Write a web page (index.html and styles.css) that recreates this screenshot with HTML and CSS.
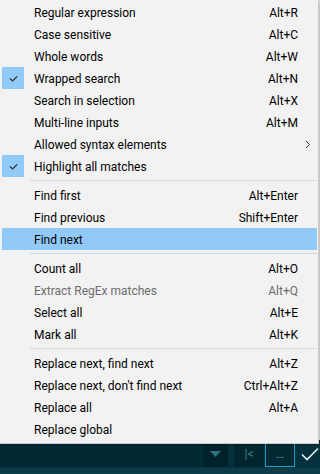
FILE: index.html
```html
<html>
  <head>
    <title>Find menu</title>
    <link rel="stylesheet" href="styles.css">
  </head>
  <body>
    <div class="screen">
      <div class="menu">
        <div class="item"><span class="gutter"></span><span class="label">Regular expression</span><span class="key">Alt+R</span><span class="sub"></span></div>
        <div class="item"><span class="gutter"></span><span class="label">Case sensitive</span><span class="key">Alt+C</span><span class="sub"></span></div>
        <div class="item"><span class="gutter"></span><span class="label">Whole words</span><span class="key">Alt+W</span><span class="sub"></span></div>
        <div class="item"><span class="gutter"><span class="check"><svg width="22" height="22" viewBox="0 0 22 22"><path d="M8 11.5l2.5 2.5l4.5-4.5" fill="none" stroke="#333" stroke-width="1.2"/></svg></span></span><span class="label">Wrapped search</span><span class="key">Alt+N</span><span class="sub"></span></div>
        <div class="item"><span class="gutter"></span><span class="label">Search in selection</span><span class="key">Alt+X</span><span class="sub"></span></div>
        <div class="item"><span class="gutter"></span><span class="label">Multi-line inputs</span><span class="key">Alt+M</span><span class="sub"></span></div>
        <div class="item"><span class="gutter"></span><span class="label">Allowed syntax elements</span><span class="key"></span><span class="sub"><svg width="6" height="9" viewBox="0 0 6 9"><path d="M1 1l3.5 3.5l-3.5 3.5" fill="none" stroke="#333" stroke-width="1"/></svg></span></div>
        <div class="item"><span class="gutter"><span class="check"><svg width="22" height="22" viewBox="0 0 22 22"><path d="M8 11.5l2.5 2.5l4.5-4.5" fill="none" stroke="#333" stroke-width="1.2"/></svg></span></span><span class="label">Highlight all matches</span><span class="key"></span><span class="sub"></span></div>
        <div class="sep"></div>
        <div class="item"><span class="gutter"></span><span class="label">Find first</span><span class="key">Alt+Enter</span><span class="sub"></span></div>
        <div class="item"><span class="gutter"></span><span class="label">Find previous</span><span class="key">Shift+Enter</span><span class="sub"></span></div>
        <div class="item hover"><span class="gutter"></span><span class="label">Find next</span><span class="key"></span><span class="sub"></span></div>
        <div class="sep"></div>
        <div class="item"><span class="gutter"></span><span class="label">Count all</span><span class="key">Alt+O</span><span class="sub"></span></div>
        <div class="item disabled"><span class="gutter"></span><span class="label">Extract RegEx matches</span><span class="key">Alt+Q</span><span class="sub"></span></div>
        <div class="item"><span class="gutter"></span><span class="label">Select all</span><span class="key">Alt+E</span><span class="sub"></span></div>
        <div class="item"><span class="gutter"></span><span class="label">Mark all</span><span class="key">Alt+K</span><span class="sub"></span></div>
        <div class="sep"></div>
        <div class="item"><span class="gutter"></span><span class="label">Replace next, find next</span><span class="key">Alt+Z</span><span class="sub"></span></div>
        <div class="item"><span class="gutter"></span><span class="label">Replace next, don't find next</span><span class="key">Ctrl+Alt+Z</span><span class="sub"></span></div>
        <div class="item"><span class="gutter"></span><span class="label">Replace all</span><span class="key">Alt+A</span><span class="sub"></span></div>
        <div class="item"><span class="gutter"></span><span class="label">Replace global</span><span class="key"></span><span class="sub"></span></div>
      </div>

      <div class="toolbar">
        <div class="combo">
          <div class="field"></div>
          <div class="drop"><svg width="11" height="6" viewBox="0 0 11 6"><path d="M0 0h11l-5.5 6z" fill="#2f6f7f"/></svg></div>
        </div>
        <div class="btn first">|&lt;</div>
        <div class="btn more">...</div>
        <div class="ok"><svg width="18" height="14" viewBox="0 0 18 14"><path d="M1 7.5l5 5l11-11" fill="none" stroke="#e6eef0" stroke-width="1.6"/></svg></div>
      </div>
      <div class="strip"></div>
    </div>
  </body>
</html>
```

FILE: styles.css
```css
* {box-sizing: border-box;}
body {margin: 0; background: #f0f0f0; font-family: Roboto, "Liberation Sans", sans-serif; font-size: 12px;}
.screen {position: relative; width: 320px; height: 474px; overflow: hidden;}

/* popup menu, lies over the toolbar */
.menu {position: absolute; left: 0; top: 0; width: 319px; height: 444px; background: #f2f2f2;
  border: 1px solid #cccccc; border-left: none; border-top: none; padding: 1px 1px 1px 2px;
  box-shadow: 1px 1px 2px rgba(0,0,0,0.25); z-index: 2;}
.item {display: flex; align-items: center; height: 22px; color: #000;}
.item .gutter {width: 32px; height: 22px; flex: none;}
.item .label {flex: 1; white-space: nowrap; padding-top: 2px;}
.item .key {text-align: right; white-space: nowrap; padding-top: 2px;}
.item .sub {width: 19px; flex: none; display: flex; justify-content: center; align-items: center;}
.item.hover {background: #91c9f7;}
.item.disabled {color: #6d6d6d;}
.check {display: block; width: 22px; height: 22px; background: #91c9f7;}
.check svg {display: block;}
.sep {height: 7px; padding-top: 3px; margin-left: 28px;}
.sep::before {content: ""; display: block; height: 1px; background: #d7d7d7;}

/* editor toolbar underneath */
.toolbar {position: absolute; left: 0; right: 0; top: 440px; height: 28px; background: #05313c;
  display: flex; align-items: stretch; padding: 1px 0;}
.combo {display: flex; width: 228px;}
.combo .field {flex: 1; background: #012a35;}
.combo .drop {width: 25px; background: #00222b; display: flex; align-items: center; justify-content: center;}
.btn {width: 30px; margin-left: 6px; background: #01262f; color: #3f8394; display: flex; align-items: center;
  justify-content: center; font-size: 12px;}
.btn.more {margin-left: 1px; border: 1px solid #23a0c6; background: #012a35; color: #8fb3bc; font-size: 10px;}
.ok {flex: 1; display: flex; align-items: center; justify-content: center; padding-left: 4px;}
.ok svg {display: block;}
.strip {position: absolute; left: 0; right: 0; top: 468px; height: 6px; background: #0b3c48;}
```
